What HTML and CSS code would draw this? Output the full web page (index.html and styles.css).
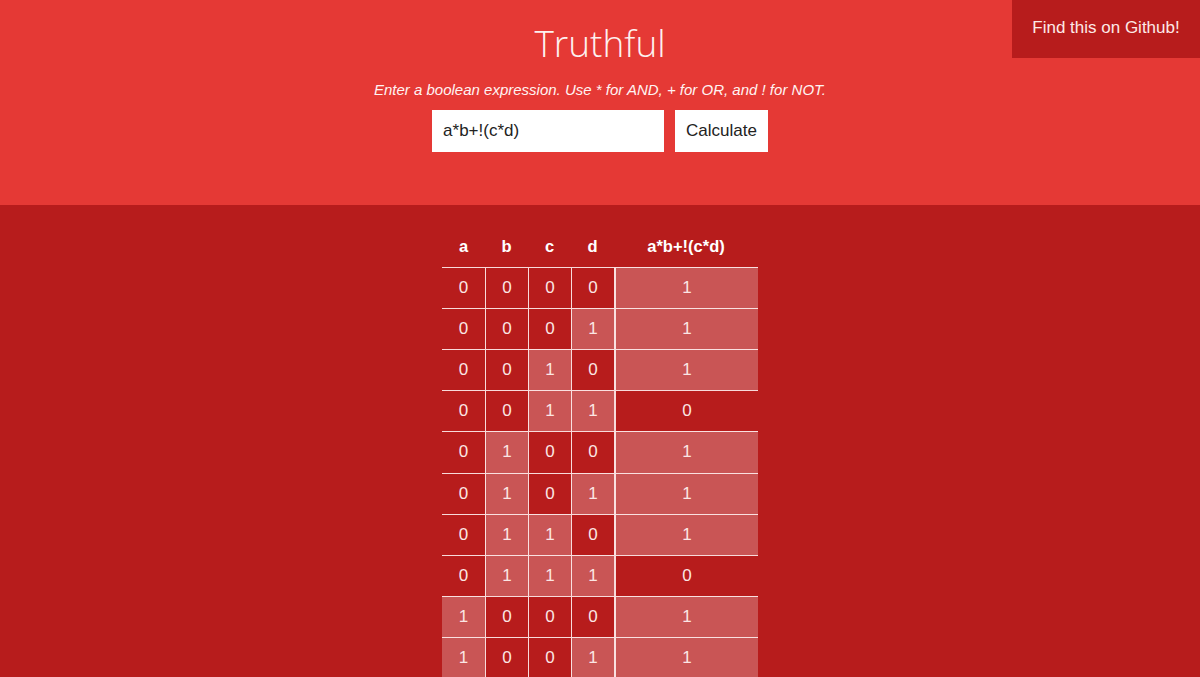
FILE: index.html
```html
<!DOCTYPE html>
<html lang="en">
<head>
<meta charset="utf-8">
<title>Truthful</title>
<link rel="stylesheet" href="styles.css">
</head>
<body>
<header class="top">
  <h1 class="title">Truthful</h1>
  <p class="hint">Enter a boolean expression. Use * for AND, + for OR, and ! for NOT.</p>
  <form class="entry">
    <input class="expr" type="text" value="a*b+!(c*d)">
    <button class="calc" type="button">Calculate</button>
  </form>
</header>
<a class="github" href="#">Find this on Github!</a>
<main class="results">
  <table class="truth">
    <colgroup>
      <col class="c-var"><col class="c-var"><col class="c-var"><col class="c-var"><col class="c-out">
    </colgroup>
    <thead>
      <tr><th>a</th><th>b</th><th>c</th><th>d</th><th class="out">a*b+!(c*d)</th></tr>
    </thead>
    <tbody id="rows"></tbody>
  </table>
</main>
<script src="script.js"></script>
</body>
</html>
```

FILE: styles.css
```css
html, body {
  margin: 0;
  padding: 0;
}
body {
  background: #b71c1c;
  font-family: "Liberation Sans", Arial, sans-serif;
  color: #fff;
}
.top {
  background: #e53935;
  padding: 17px 0 53px;
  text-align: center;
}
.title {
  margin: 0;
  font-family: "Open Sans", sans-serif;
  font-weight: 300;
  font-size: 37px;
  line-height: 52px;
  color: #fdf1f0;
}
.hint {
  margin: 11px 0 10px;
  font-size: 15px;
  line-height: 20px;
  font-style: italic;
  color: #fff3f2;
}
.entry {
  display: flex;
  justify-content: center;
  gap: 11px;
  margin: 0;
}
.expr {
  box-sizing: border-box;
  width: 232px;
  height: 42px;
  border: 0;
  padding: 0 11px;
  font-family: "Liberation Sans", Arial, sans-serif;
  font-size: 17px;
  color: #222;
  background: #fff;
  outline: none;
}
.calc {
  box-sizing: border-box;
  height: 42px;
  border: 0;
  padding: 0 11px;
  font-family: "Liberation Sans", Arial, sans-serif;
  font-size: 17px;
  color: #222;
  background: #fff;
}
.github {
  position: absolute;
  top: 0;
  right: 0;
  width: 188px;
  height: 58px;
  box-sizing: border-box;
  line-height: 56px;
  text-align: center;
  font-size: 17px;
  color: #fde9e7;
  text-decoration: none;
  background: #b71c1c;
}
.results {
  padding-top: 20px;
}
.truth {
  margin: 0 auto;
  border-collapse: separate;
  border-spacing: 0;
  table-layout: fixed;
}
.c-var { width: 43px; }
.c-out { width: 144px; }
.truth th {
  height: 42px;
  padding: 0;
  font-size: 16.5px;
  font-weight: bold;
  color: #fff;
  text-align: center;
  vertical-align: middle;
}
.truth td {
  box-sizing: border-box;
  height: 41.12px;
  padding: 0;
  text-align: center;
  vertical-align: middle;
  font-size: 17px;
  color: #fbe6e4;
  border-top: 1px solid rgba(255, 240, 240, 0.9);
  border-left: 1px solid rgba(255, 240, 240, 0.9);
}
.truth td:first-child {
  border-left: 0;
}
.truth td.out {
  border-left: 2px solid rgba(255, 240, 240, 0.9);
}
.truth td.on {
  background: rgba(255, 255, 255, 0.25);
}
```

FILE: script.js
```js
(function () {
  var tbody = document.getElementById('rows');
  for (var i = 0; i < 16; i++) {
    var a = (i >> 3) & 1, b = (i >> 2) & 1, c = (i >> 1) & 1, d = i & 1;
    var r = (a & b) | (1 - (c & d));
    var tr = document.createElement('tr');
    [a, b, c, d, r].forEach(function (v, k) {
      var td = document.createElement('td');
      td.textContent = v;
      if (v) td.classList.add('on');
      if (k === 4) td.classList.add('out');
      tr.appendChild(td);
    });
    tbody.appendChild(tr);
  }
})();
```
